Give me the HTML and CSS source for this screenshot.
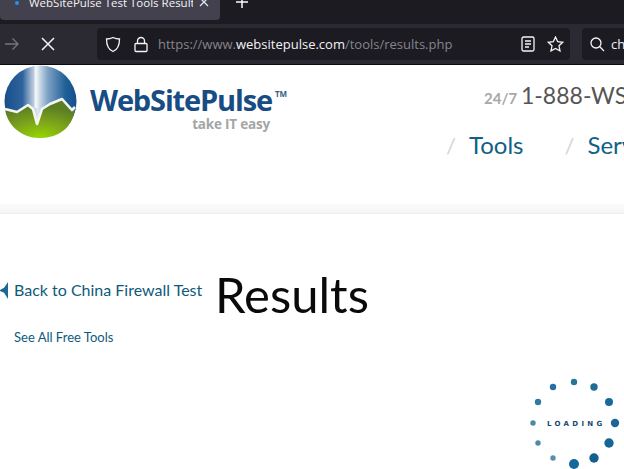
FILE: index.html
```html
<!DOCTYPE html>
<html lang="en">
<head>
  <meta charset="UTF-8">
  <meta name="viewport" content="width=device-width, initial-scale=1.0">
  <title>WebSitePulse Test Tools Results</title>
  <link rel="stylesheet" href="styles.css">
</head>
<body>

  <div class="tabbar">
    <div class="tab">
      <span class="tab-dot"></span>
      <span class="tab-title">WebSitePulse Test Tools Results</span>
      <svg class="tab-close" width="10" height="10" viewBox="0 0 10 10"><path d="M1 1l8 8M9 1l-8 8"/></svg>
    </div>
    <svg class="new-tab" width="12" height="12" viewBox="0 0 12 12"><path d="M6 0v12M0 6h12"/></svg>
  </div>

  <div class="toolbar">
    <svg class="nav-forward" width="16" height="14" viewBox="0 0 16 14"><path d="M1 7h13M8.500 1.500L14 7l-5.500 5.500"/></svg>
    <svg class="nav-stop" width="14" height="14" viewBox="0 0 14 14"><path d="M1 1l12 12M13 1L1 13"/></svg>
    <div class="urlbar">
      <svg class="ico" width="16" height="17" viewBox="0 0 16 17"><path d="M8 1.500c2 1 4 1.500 6.500 1.500 0 6-1.500 10.500-6.500 12.500C3 13.500 1.500 9 1.500 3 4 3 6 2.500 8 1.500z"/></svg>
      <svg class="ico lock" width="14" height="17" viewBox="0 0 14 17"><path d="M2 7.500h10a1 1 0 0 1 1 1v6a1 1 0 0 1-1 1H2a1 1 0 0 1-1-1v-6a1 1 0 0 1 1-1zM3.500 7.500V5a3.500 3.500 0 0 1 7 0v2.500"/></svg>
      <div class="url">https://www.<b>websitepulse.com</b>/tools/results.php</div>
      <svg class="ico" width="14" height="16" viewBox="0 0 14 16"><path d="M2.500 1h9A1.500 1.500 0 0 1 13 2.500v11a1.500 1.500 0 0 1-1.500 1.500h-9A1.500 1.500 0 0 1 1 13.500v-11A1.500 1.500 0 0 1 2.500 1zM4 5h6M4 8h6M4 11h4"/></svg>
      <svg class="ico star" width="17" height="16" viewBox="0 0 17 16"><path d="M8.500 1l2.200 4.700 5 .6-3.700 3.500 1 5.100-4.500-2.500-4.500 2.500 1-5.100L1.300 6.300l5-.6z"/></svg>
    </div>
    <div class="searchbar">
      <svg class="ico" width="15" height="15" viewBox="0 0 15 15"><path d="M6 1a5 5 0 1 1 0 10A5 5 0 0 1 6 1zM9.800 9.800L14 14"/></svg>
      <span>china</span>
    </div>
  </div>

  <div class="page">
    <header class="site-header">
      <div class="brand">
        <svg class="globe" width="73" height="73" viewBox="0 0 73 73">
          <defs>
            <linearGradient id="sky" x1="0" y1="0" x2="1" y2="0">
              <stop offset="0" stop-color="#174f8c"/>
              <stop offset=".25" stop-color="#2f639c"/>
              <stop offset=".38" stop-color="#a8bdd5"/>
              <stop offset=".46" stop-color="#dfe8f0"/>
              <stop offset=".6" stop-color="#7ea2c4"/>
              <stop offset=".85" stop-color="#1f5f98"/>
              <stop offset="1" stop-color="#174f8c"/>
            </linearGradient>
            <radialGradient id="grass" cx=".5" cy="1" r=".8">
              <stop offset="0" stop-color="#96d800"/>
              <stop offset=".5" stop-color="#7fa81a"/>
              <stop offset="1" stop-color="#5d7f24"/>
            </radialGradient>
          </defs>
          <circle cx="36.500" cy="36.500" r="36" fill="url(#sky)"/>
          <path d="M1 44l12 3 11-7 5 4 4 15 5-15 8-5 12-5 10 11 3-3c-1 20-16 31-35 31C17 73 3 60 1 44z" fill="url(#grass)"/>
          <path d="M1 44l12 3 11-7 5 4 4 15 5-15 8-5 12-5 10 11 3-3" fill="none" stroke="#f4f6f2" stroke-width="2.600" stroke-linejoin="round"/>
          <path d="M32 1v42" stroke="#eef3f7" stroke-width="3"/>
        </svg>
        <div class="wordmark">
          <div class="brand-name">WebSitePulse<sup>TM</sup></div>
          <div class="brand-tag">take IT easy</div>
        </div>
      </div>
      <div class="header-right">
        <div class="phone"><span class="phone-hours">24/7</span> 1-888-WSPULSE</div>
        <nav class="mainnav">
          <a class="nav-link" href="#">Tools</a>
          <a class="nav-link" href="#">Services</a>
        </nav>
      </div>
    </header>
    <div class="header-band"></div>

    <main class="content">
      <div class="links">
        <a class="back-link" href="#">
          <svg width="9" height="17" viewBox="0 0 8 15"><path d="M8 0v15L4.500 9.500 0 7.500 4.500 5z"/></svg>
          Back to China Firewall Test
        </a>
        <a class="all-link" href="#">See All Free Tools</a>
      </div>
      <h1 class="page-title">Results</h1>
    </main>

    <div class="loader">
      <svg width="92" height="94" viewBox="0 0 92 94">
        <circle cx="41" cy="3" r="3.200" fill="#2a7597"/>
        <circle cx="61" cy="8" r="3.700" fill="#216c96"/>
        <circle cx="76" cy="23" r="4" fill="#196a9c"/>
        <circle cx="82" cy="44" r="4.200" fill="#1c6596"/>
        <circle cx="76" cy="64" r="4.700" fill="#156595"/>
        <circle cx="61" cy="79" r="4.700" fill="#155f90"/>
        <circle cx="41" cy="85" r="5" fill="#14689b"/>
        <circle cx="20" cy="79" r="2.700" fill="#5a8fa9"/>
        <circle cx="5" cy="64" r="2.700" fill="#4c8aa6"/>
        <circle cx="0" cy="44" r="2.700" fill="#4c8aa0"/>
        <circle cx="5" cy="23" r="3.200" fill="#2f7ba3"/>
        <circle cx="20" cy="8" r="3.200" fill="#276ea3"/>
      </svg>
      <div class="loader-text">LOADING</div>
    </div>
  </div>

</body>
</html>
```

FILE: styles.css
```css
body {
  margin: 0;
  width: 624px;
  height: 469px;
  overflow: hidden;
  background-color: #fff;
  font-family: Lato, sans-serif;
}

/* browser */
.tabbar {
  height: 24px;
  background-color: #1c1b22;
  display: flex;
  align-items: flex-start;
  overflow: hidden;
}

.tab {
  width: 220px;
  height: 20px;
  box-sizing: border-box;
  padding: 0 11px 0 15px;
  background-color: #42414d;
  border-radius: 0 0 4px 4px;
  display: flex;
  align-items: flex-end;
  overflow: hidden;
}

.tab-dot {
  width: 4px;
  height: 4px;
  border-radius: 50%;
  background-color: #2a8fe8;
  flex: none;
  margin-bottom: 15px;
}

.tab-title {
  flex: 1;
  min-width: 0;
  white-space: nowrap;
  overflow: hidden;
  font: 11.500px/20px "Open Sans", sans-serif;
  color: #f4f4f6;
  position: relative;
  top: -7px;
  margin: 0 6px 0 10px;
}

.tab-close {
  flex: none;
  margin-bottom: 13px;
}

.tab-close path {
  fill: none;
  stroke: #e5e5e8;
  stroke-width: 1.300;
}

.new-tab {
  margin: -4px 0 0 16px;
}

.new-tab path {
  fill: none;
  stroke: #fbfbfe;
  stroke-width: 1.500;
}

.toolbar {
  height: 41px;
  box-sizing: border-box;
  background-color: #2b2a33;
  border-bottom: 1px solid #0c0c0d;
  display: flex;
  align-items: center;
  padding-left: 4px;
}

.nav-forward {
  flex: none;
}

.nav-forward path {
  fill: none;
  stroke: #77767d;
  stroke-width: 1.300;
}

.nav-stop {
  flex: none;
  margin-left: 21px;
}

.nav-stop path {
  fill: none;
  stroke: #f2f2f4;
  stroke-width: 1.500;
}

.urlbar {
  width: 473px;
  height: 32px;
  box-sizing: border-box;
  margin-left: 42px;
  padding: 0 6px 0 8px;
  flex: none;
  background-color: #1c1b22;
  border-radius: 4px;
  display: flex;
  align-items: center;
}

.ico {
  flex: none;
}

.ico path {
  fill: none;
  stroke: #f4f4f6;
  stroke-width: 1.300;
}

.lock {
  margin-left: 13px;
}

.star {
  margin-left: 12px;
}

.url {
  flex: 1;
  white-space: nowrap;
  font: 13px "Open Sans", sans-serif;
  color: #85848c;
  margin-left: 10px;
}

.url b {
  font-weight: 400;
  color: #f2f2f4;
}

.searchbar {
  flex: none;
  width: 60px;
  height: 32px;
  margin-left: 12px;
  padding-left: 8px;
  box-sizing: border-box;
  background-color: #1c1b22;
  border-radius: 4px;
  display: flex;
  align-items: center;
  gap: 6px;
  font: 13px "Open Sans", sans-serif;
  color: #f2f2f4;
  overflow: hidden;
}

/* site */
.page {
  position: relative;
  height: 404px;
  overflow: hidden;
}

.site-header {
  height: 139px;
  display: flex;
  justify-content: space-between;
}

.brand {
  display: flex;
  padding-left: 4px;
  align-items: flex-start;
  flex: none;
}

.globe {
  flex: none;
}

.wordmark {
  margin-left: 13px;
  padding-top: 18px;
  width: 200px;
}

.brand-name {
  font-family: "Open Sans", sans-serif;
  font-size: 29px;
  font-weight: 700;
  letter-spacing: -1.150px;
  line-height: 34px;
  color: #174d83;
  white-space: nowrap;
}

.brand-name sup {
  font-size: 8px;
  letter-spacing: 0;
  font-weight: 700;
  color: #3b5e7e;
  vertical-align: 14px;
  line-height: 0;
  margin-left: 3px;
}

.brand-tag {
  font-family: "Open Sans", sans-serif;
  font-size: 13.500px;
  font-weight: 700;
  letter-spacing: -0.2px;
  line-height: 14px;
  color: #a3a5a6;
  text-align: right;
  margin-right: 20px;
}

.header-right {
  width: 178px;
  flex: none;
  white-space: nowrap;
  overflow: hidden;
  padding-top: 15px;
}

.phone {
  font-size: 23px;
  line-height: 30px;
  color: #555;
  padding-left: 38px;
  word-spacing: -2px;
}

.phone-hours {
  font-size: 15px;
  font-weight: 700;
  color: #a8a8a8;
}

.mainnav {
  display: flex;
  margin-top: 16px;
  gap: 41px;
}

.nav-link {
  font-size: 24px;
  line-height: 32px;
  color: #0f6186;
  text-decoration: none;
}

.nav-link::before {
  content: "/";
  color: #d5d5d5;
  font-size: 22px;
  margin-right: 13px;
}

.header-band {
  height: 9px;
  background: linear-gradient(#fafafa, #f6f6f6);
  border-bottom: 1px solid #efefef;
}

.content {
  display: flex;
  align-items: flex-start;
  padding-top: 50px;
}

.links {
  width: 215px;
  flex: none;
  padding-top: 15px;
}

.back-link {
  display: flex;
  align-items: center;
  gap: 6px;
  font-size: 16px;
  line-height: 22px;
  color: #0f5a7c;
  text-decoration: none;
}

.back-link svg {
  fill: #1c6a94;
  margin-left: -1px;
}

.all-link {
  display: block;
  margin: 27px 0 0 14px;
  font-size: 13px;
  line-height: 18px;
  color: #0f5a7c;
  text-decoration: none;
}

.page-title {
  margin: 0;
  font-size: 49px;
  font-weight: 400;
  line-height: 60px;
  color: #0a0a0a;
}

.loader {
  position: absolute;
  left: 533px;
  top: 314px;
}

.loader svg {
  display: block;
  overflow: visible;
}

.loader-text {
  position: absolute;
  left: 14px;
  top: 39px;
  font: 700 7px/12px "DejaVu Sans", sans-serif;
  letter-spacing: 3.300px;
  color: #174a70;
}
```
